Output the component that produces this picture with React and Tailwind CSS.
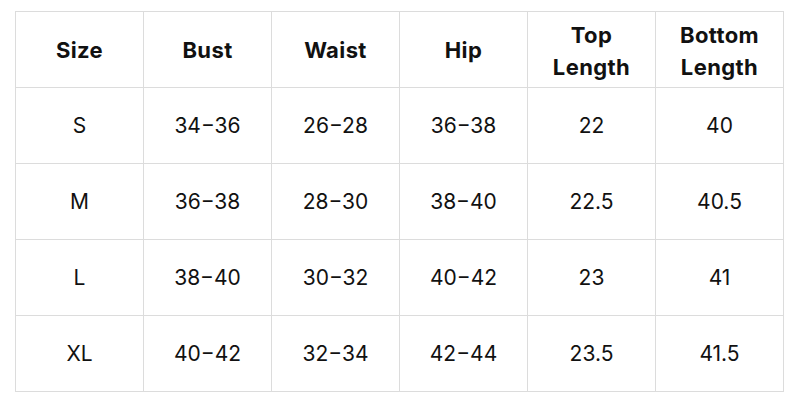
import React from 'react';

const headers = ['Size', 'Bust', 'Waist', 'Hip', ['Top', 'Length'], ['Bottom', 'Length']];

const rows = [
  ['S', '34−36', '26−28', '36−38', '22', '40'],
  ['M', '36−38', '28−30', '38−40', '22.5', '40.5'],
  ['L', '38−40', '30−32', '40−42', '23', '41'],
  ['XL', '40−42', '32−34', '42−44', '23.5', '41.5'],
];

const App = () => {
  return (
    <div className="w-[800px] h-[400px] bg-white pl-[15px] pt-[11px] font-['Inter',sans-serif] text-[#111]">
      <div className="grid grid-cols-[repeat(6,128px)] w-[769px] border-l border-t border-[#dcdcdc]">
        {/* Header row */}
        {headers.map((h, i) => (
          <div
            key={i}
            className="h-[76px] flex flex-col items-center justify-center border-r border-b border-[#dcdcdc] text-[22px] font-bold leading-[32px] tracking-[0.4px]"
          >
            {Array.isArray(h) ? (
              h.map((line, j) => (
                <span key={line} className={j === 0 ? 'pt-[2px]' : ''}>
                  {line}
                </span>
              ))
            ) : (
              h
            )}
          </div>
        ))}

        {/* Size rows */}
        {rows.map((row, r) =>
          row.map((cell, c) => (
            <div
              key={`${r}-${c}`}
              className="h-[76px] flex items-center justify-center border-r border-b border-[#dcdcdc] text-[21px]"
            >
              {cell}
            </div>
          ))
        )}
      </div>
    </div>
  );
};

export default App;
